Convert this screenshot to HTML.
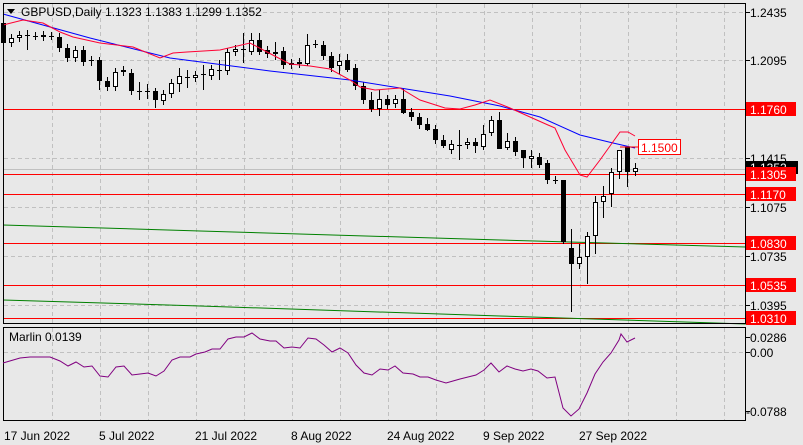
<!DOCTYPE html>
<html><head><meta charset="utf-8">
<style>
html,body{margin:0;padding:0;background:#e8e8e8;width:803px;height:445px;overflow:hidden;font-family:"Liberation Sans",sans-serif;}
svg{display:block}
text{font-family:"Liberation Sans",sans-serif;font-size:12px;fill:#000}
</style></head><body>
<svg id="s" width="803" height="445" xmlns="http://www.w3.org/2000/svg">
<rect width="803" height="445" fill="#e8e8e8"/>
<g id="grid" stroke="#c0c0c0" stroke-dasharray="4,3" stroke-width="1"></g>
<line x1="3" y1="169.5" x2="746" y2="169.5" stroke="#c0c0c0"/>
<g stroke="#ff0000" stroke-width="1">
<line x1="3" y1="109.5" x2="746" y2="109.5"/>
<line x1="3" y1="174.5" x2="746" y2="174.5"/>
<line x1="3" y1="194.5" x2="746" y2="194.5"/>
<line x1="3" y1="243.5" x2="746" y2="243.5"/>
<line x1="3" y1="285.5" x2="746" y2="285.5"/>
<line x1="3" y1="318.5" x2="746" y2="318.5"/>
</g>
<polyline fill="none" stroke="#008000" stroke-width="1" points="3,225 200,231 500,240 746,247"/>
<polyline fill="none" stroke="#008000" stroke-width="1" points="3,300 200,306 500,316 746,324"/>
<g id="candles"></g>
<polyline fill="none" stroke="#0000ff" stroke-width="1" points="3,14 90,38 170,58 270,71 350,80 400,88 450,96 500,106 540,117 580,135 613,143 635,148"/>
<polyline fill="none" stroke="#ff0033" stroke-width="1" points="3,25 23,20 43,23 60,32 73,37 100,43 133,47 160,58 173,53 187,52 220,50 250,43 267,52 290,64 310,66 330,69 350,80 360,87 375,90 400,88 420,100 445,108 460,109 475,105 490,100 510,108 530,117 548,125 555,128 565,150 580,175 587,177 600,160 620,132 628,132 635,136"/>
<rect x="3.5" y="3.5" width="742" height="320" fill="none" stroke="#000"/>
<rect x="3.5" y="327.5" width="742" height="93" fill="none" stroke="#000"/>
<path d="M7,9 L15,9 L11,14 Z" fill="#000"/>
<text x="21" y="16">GBPUSD,Daily  1.1323 1.1383 1.1299 1.1352</text>
<rect x="638.5" y="139.5" width="42" height="15" fill="#fff" stroke="#ff0000"/>
<text x="641" y="152" style="fill:#ff0000">1.1500</text>
<line x1="620" y1="147" x2="638" y2="147" stroke="#ff0000"/>
<g id="axis"></g>
<text x="9" y="341">Marlin 0.0139</text>
<polyline fill="none" stroke="#800080" stroke-width="1" points="3,363 20,358 30,357 50,357 60,361 68,366 76,362 84,367 92,366 100,376 108,377 116,367 124,366 132,375 140,374 148,373 156,376 164,371 172,360 180,357 190,357 196,354 205,352 212,349 220,349 228,339 236,337 244,337 252,333 260,339 270,341 276,341 284,348 292,347 300,348 308,338 316,339 324,345 332,352 340,348 348,353 356,365 364,373 372,375 380,369 388,370 395,366 403,373 413,374 420,377 428,377 436,380 446,383 453,381 460,379 468,377 476,375 484,370 491,363 499,372 507,366 515,369 523,371 531,369 538,371 547,378 555,377 563,408 571,416 579,409 587,393 595,374 603,362 611,353 619,340 621,334 627,342 635,338"/>
<g font-size="12">
<text x="4" y="440">17 Jun 2022</text>
<text x="99" y="440">5 Jul 2022</text>
<text x="195" y="440">21 Jul 2022</text>
<text x="291" y="440">8 Aug 2022</text>
<text x="387" y="440">24 Aug 2022</text>
<text x="483" y="440">9 Sep 2022</text>
<text x="579" y="440">27 Sep 2022</text>
</g>
</svg>
<script>
var NS="http://www.w3.org/2000/svg";
function el(p,t,a,txt){var e=document.createElementNS(NS,t);for(var k in a)e.setAttribute(k,a[k]);if(txt)e.textContent=txt;p.appendChild(e);return e;}
var g=document.getElementById('grid');
for(var x=52;x<746;x+=48){el(g,'line',{x1:x+.5,y1:4,x2:x+.5,y2:323});el(g,'line',{x1:x+.5,y1:328,x2:x+.5,y2:420});}
[12,60,158,207,256,305].forEach(function(y){el(g,'line',{x1:4,y1:y+.5,x2:745,y2:y+.5});});
el(g,'line',{x1:4,y1:352.5,x2:745,y2:352.5});
var c=[[23,43,'b',20,48],[38,43,'w'],[35,38,'w'],[35,36,'d',30,50],[36,36,'d'],[35,37,'w'],[36,36,'d'],[37,48,'b'],[48,58,'b'],[50,58,'w'],[50,62,'b'],[60,60,'d',56,66],[60,81,'b',57,90],[81,87,'b'],[72,87,'w'],[70,72,'w'],[73,91,'b'],[91,91,'d',82,100],[91,91,'d',84,99],[91,100,'b',88,108],[94,101,'w'],[83,94,'w'],[76,84,'w',68,92],[77,77,'d',70,88],[75,78,'w'],[74,74,'d',65,90],[69,76,'w'],[70,70,'d',60,80],[52,71,'w'],[49,52,'w'],[49,49,'d',33,63],[40,52,'w',33,55],[40,52,'b',33,55],[50,54,'b'],[52,54,'w',42,60],[51,65,'b'],[63,65,'w'],[62,64,'b'],[45,64,'w',34,66],[44,44,'d',40,48],[45,56,'b'],[56,68,'b'],[61,66,'w',54,74],[60,70,'b',54,72],[68,86,'b'],[86,100,'b'],[100,109,'b',92,112],[99,109,'w',90,116],[99,105,'b'],[99,104,'w'],[99,113,'b',88,114],[112,117,'b'],[117,125,'b'],[124,130,'b',118,131],[129,140,'b'],[140,146,'b',135,148],[144,150,'w'],[145,145,'d',130,160],[142,145,'w'],[142,146,'b',138,153],[134,147,'w',125,150],[120,133,'w',116,136],[120,149,'b',112,149],[141,148,'w',133,150],[141,152,'b'],[150,158,'b',150,168],[156,159,'w',150,168],[157,165,'b',153,168],[163,180,'b',160,184],[180,180,'d',176,184],[180,242,'b',180,244],[248,264,'b',229,312],[257,264,'w',244,269],[236,257,'w',232,284],[202,236,'w',196,254],[196,202,'w',186,218],[172,194,'w',168,207],[150,172,'w',150,179],[147,172,'b',146,187],[168,172,'w',163,176]];
var cg=document.getElementById('candles');
c.forEach(function(d,i){var x=3+8*i;var hi=d[3]!==undefined?d[3]:d[0]-4,lo=d[4]!==undefined?d[4]:d[1]+4;
el(cg,'line',{x1:x+.5,y1:hi,x2:x+.5,y2:lo,stroke:'#000'});
if(d[2]=='d'){el(cg,'line',{x1:x-2,y1:d[0]+.5,x2:x+3,y2:d[0]+.5,stroke:'#000'});}
else if(d[2]=='b'){el(cg,'rect',{x:x-2,y:d[0],width:5,height:Math.max(1,d[1]-d[0]),fill:'#000'});}
else{el(cg,'rect',{x:x-1.5,y:d[0]+.5,width:4,height:Math.max(1,d[1]-d[0]-1),fill:'#fff',stroke:'#000'});}
});
var a=document.getElementById('axis');
[[12,'1.2435'],[60,'1.2095'],[158,'1.1415'],[207,'1.1075'],[256,'1.0735'],[305,'1.0395'],[337,'0.0286'],[352,'0.00'],[411,'-0.0788']].forEach(function(t){
el(a,'line',{x1:746,y1:t[0]+.5,x2:750,y2:t[0]+.5,stroke:'#000'});el(a,'text',{x:t[1][0]=='-'?746:750,y:t[0]+5},t[1]);});
el(a,'rect',{x:746,y:161,width:52,height:13,fill:'#000'});
el(a,'text',{x:750,y:172,style:'fill:#fff'},'1.1352');
[[109,'1.1760'],[174,'1.1305'],[194,'1.1170'],[243,'1.0830'],[285,'1.0535'],[318,'1.0310']].forEach(function(t){
el(a,'rect',{x:746,y:t[0]-7,width:50,height:14,fill:'#ff0000'});
el(a,'text',{x:750,y:t[0]+5,style:'fill:#fff'},t[1]);});
</script>
</body></html>
